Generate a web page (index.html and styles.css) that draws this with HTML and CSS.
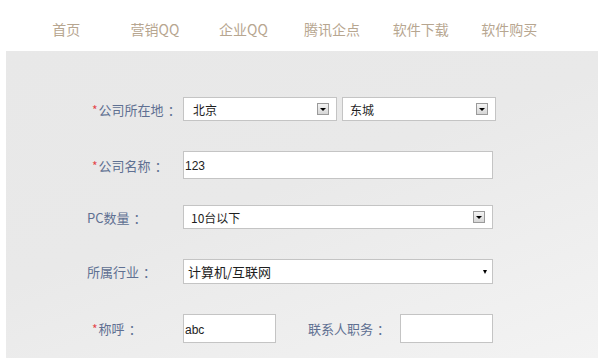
FILE: index.html
```html
<!DOCTYPE html>
<html lang="zh-CN">
<head>
<meta charset="utf-8">
<title>企业QQ 购买</title>
<link rel="stylesheet" href="styles.css">
</head>
<body>
<div class="page">
  <header class="header">
    <nav class="nav">
      <a class="nav-item" href="#">首页</a>
      <a class="nav-item" href="#">营销QQ</a>
      <a class="nav-item" href="#">企业QQ</a>
      <a class="nav-item" href="#">腾讯企点</a>
      <a class="nav-item" href="#">软件下载</a>
      <a class="nav-item" href="#">软件购买</a>
    </nav>
  </header>
  <main class="panel">
    <form class="form">
      <div class="row row-1">
        <label class="label required"><span class="star">*</span>公司所在地<span class="colon">：</span></label>
        <div class="select w154"><span class="select-text pad10">北京</span><span class="arrow-box"><span class="tri"></span></span></div>
        <div class="select w154 ml5"><span class="select-text pad8">东城</span><span class="arrow-box"><span class="tri"></span></span></div>
      </div>
      <div class="row row-2">
        <label class="label required"><span class="star">*</span>公司名称<span class="colon">：</span></label>
        <div class="input w310 h28">123</div>
      </div>
      <div class="row row-3">
        <label class="label">PC数量<span class="colon">：</span></label>
        <div class="select w310"><span class="select-text pad8">10台以下</span><span class="arrow-box"><span class="tri"></span></span></div>
      </div>
      <div class="row row-4">
        <label class="label">所属行业<span class="colon">：</span></label>
        <div class="select native w310"><span class="select-text pad5 big">计算机/互联网</span><span class="tri tri-native"></span></div>
      </div>
      <div class="row row-5">
        <label class="label required"><span class="star">*</span>称呼<span class="colon">：</span></label>
        <div class="input w93 h29">abc</div>
        <label class="label label-inline">联系人职务<span class="colon">：</span></label>
        <div class="input w93 h29"></div>
      </div>
    </form>
  </main>
</div>
</body>
</html>
```
FILE: styles.css
```css
html, body {
  margin: 0;
  padding: 0;
  background: #ffffff;
}
body {
  font-family: "Noto Sans CJK SC", "Liberation Sans", sans-serif;
  overflow: hidden;
}
.page {
  padding-left: 6px;
}
.header {
  height: 51px;
  box-sizing: border-box;
  padding-top: 8px;
}
.nav {
  display: flex;
  padding-left: 16px;
  height: 42px;
  align-items: center;
}
.nav-item {
  width: 88.6px;
  text-align: center;
  font-size: 14px;
  color: #b7a690;
  text-decoration: none;
}
.panel {
  background: linear-gradient(160deg, #e8e8e8 0%, #e9e9e9 45%, #f3f3f3 100%);
  min-height: 307px;
  box-sizing: border-box;
  padding: 46px 0 14px 81px;
}
.form {
  display: flex;
  flex-direction: column;
  gap: 30px;
}
.row {
  display: flex;
  align-items: center;
}
.row-3 {
  margin-top: -4px;
}
.label {
  width: 96px;
  flex: none;
  font-size: 13px;
  color: #5f7092;
  white-space: nowrap;
  box-sizing: border-box;
}
.label.required {
  padding-left: 5px;
}
.colon {
  margin-left: 4px;
}
.star {
  color: #e4474b;
  margin-right: 1px;
  font-size: 12px;
}
.label-inline {
  width: 92px;
  margin-left: 32px;
}
.select, .input {
  box-sizing: border-box;
  background: #ffffff;
  border: 1px solid #c4c4c4;
  display: flex;
  align-items: center;
  flex: none;
}
.select {
  height: 24px;
  font-size: 12px;
  color: #1e1e1e;
}
.select.native {
  height: 25px;
}
.select-text {
  flex: 1;
  white-space: nowrap;
}
.select-text.big {
  font-size: 13px;
}
.pad10 { padding-left: 9px; }
.pad8 { padding-left: 7px; }
.pad5 { padding-left: 4px; }
.arrow-box {
  width: 12px;
  height: 12px;
  box-sizing: border-box;
  border: 1px solid #9a9a9a;
  background: linear-gradient(#f4f4f4, #d6d6d6);
  margin-right: 7px;
  display: flex;
  align-items: center;
  justify-content: center;
}
.tri {
  width: 0;
  height: 0;
  border-left: 3px solid transparent;
  border-right: 3px solid transparent;
  border-top: 3px solid #000;
}
.tri-native {
  border-left-width: 2.5px;
  border-right-width: 2.5px;
  border-top-width: 4px;
  margin-right: 5px;
}
.ml5 { margin-left: 5px; }
.w154 { width: 154px; }
.w310 { width: 310px; }
.w93 { width: 93px; }
.h28 { height: 28px; }
.h29 { height: 29px; }
.input {
  font-family: "Liberation Sans", Arial, sans-serif;
  font-size: 12px;
  color: #222;
  padding-left: 1px;
  padding-top: 2px;
}
```
